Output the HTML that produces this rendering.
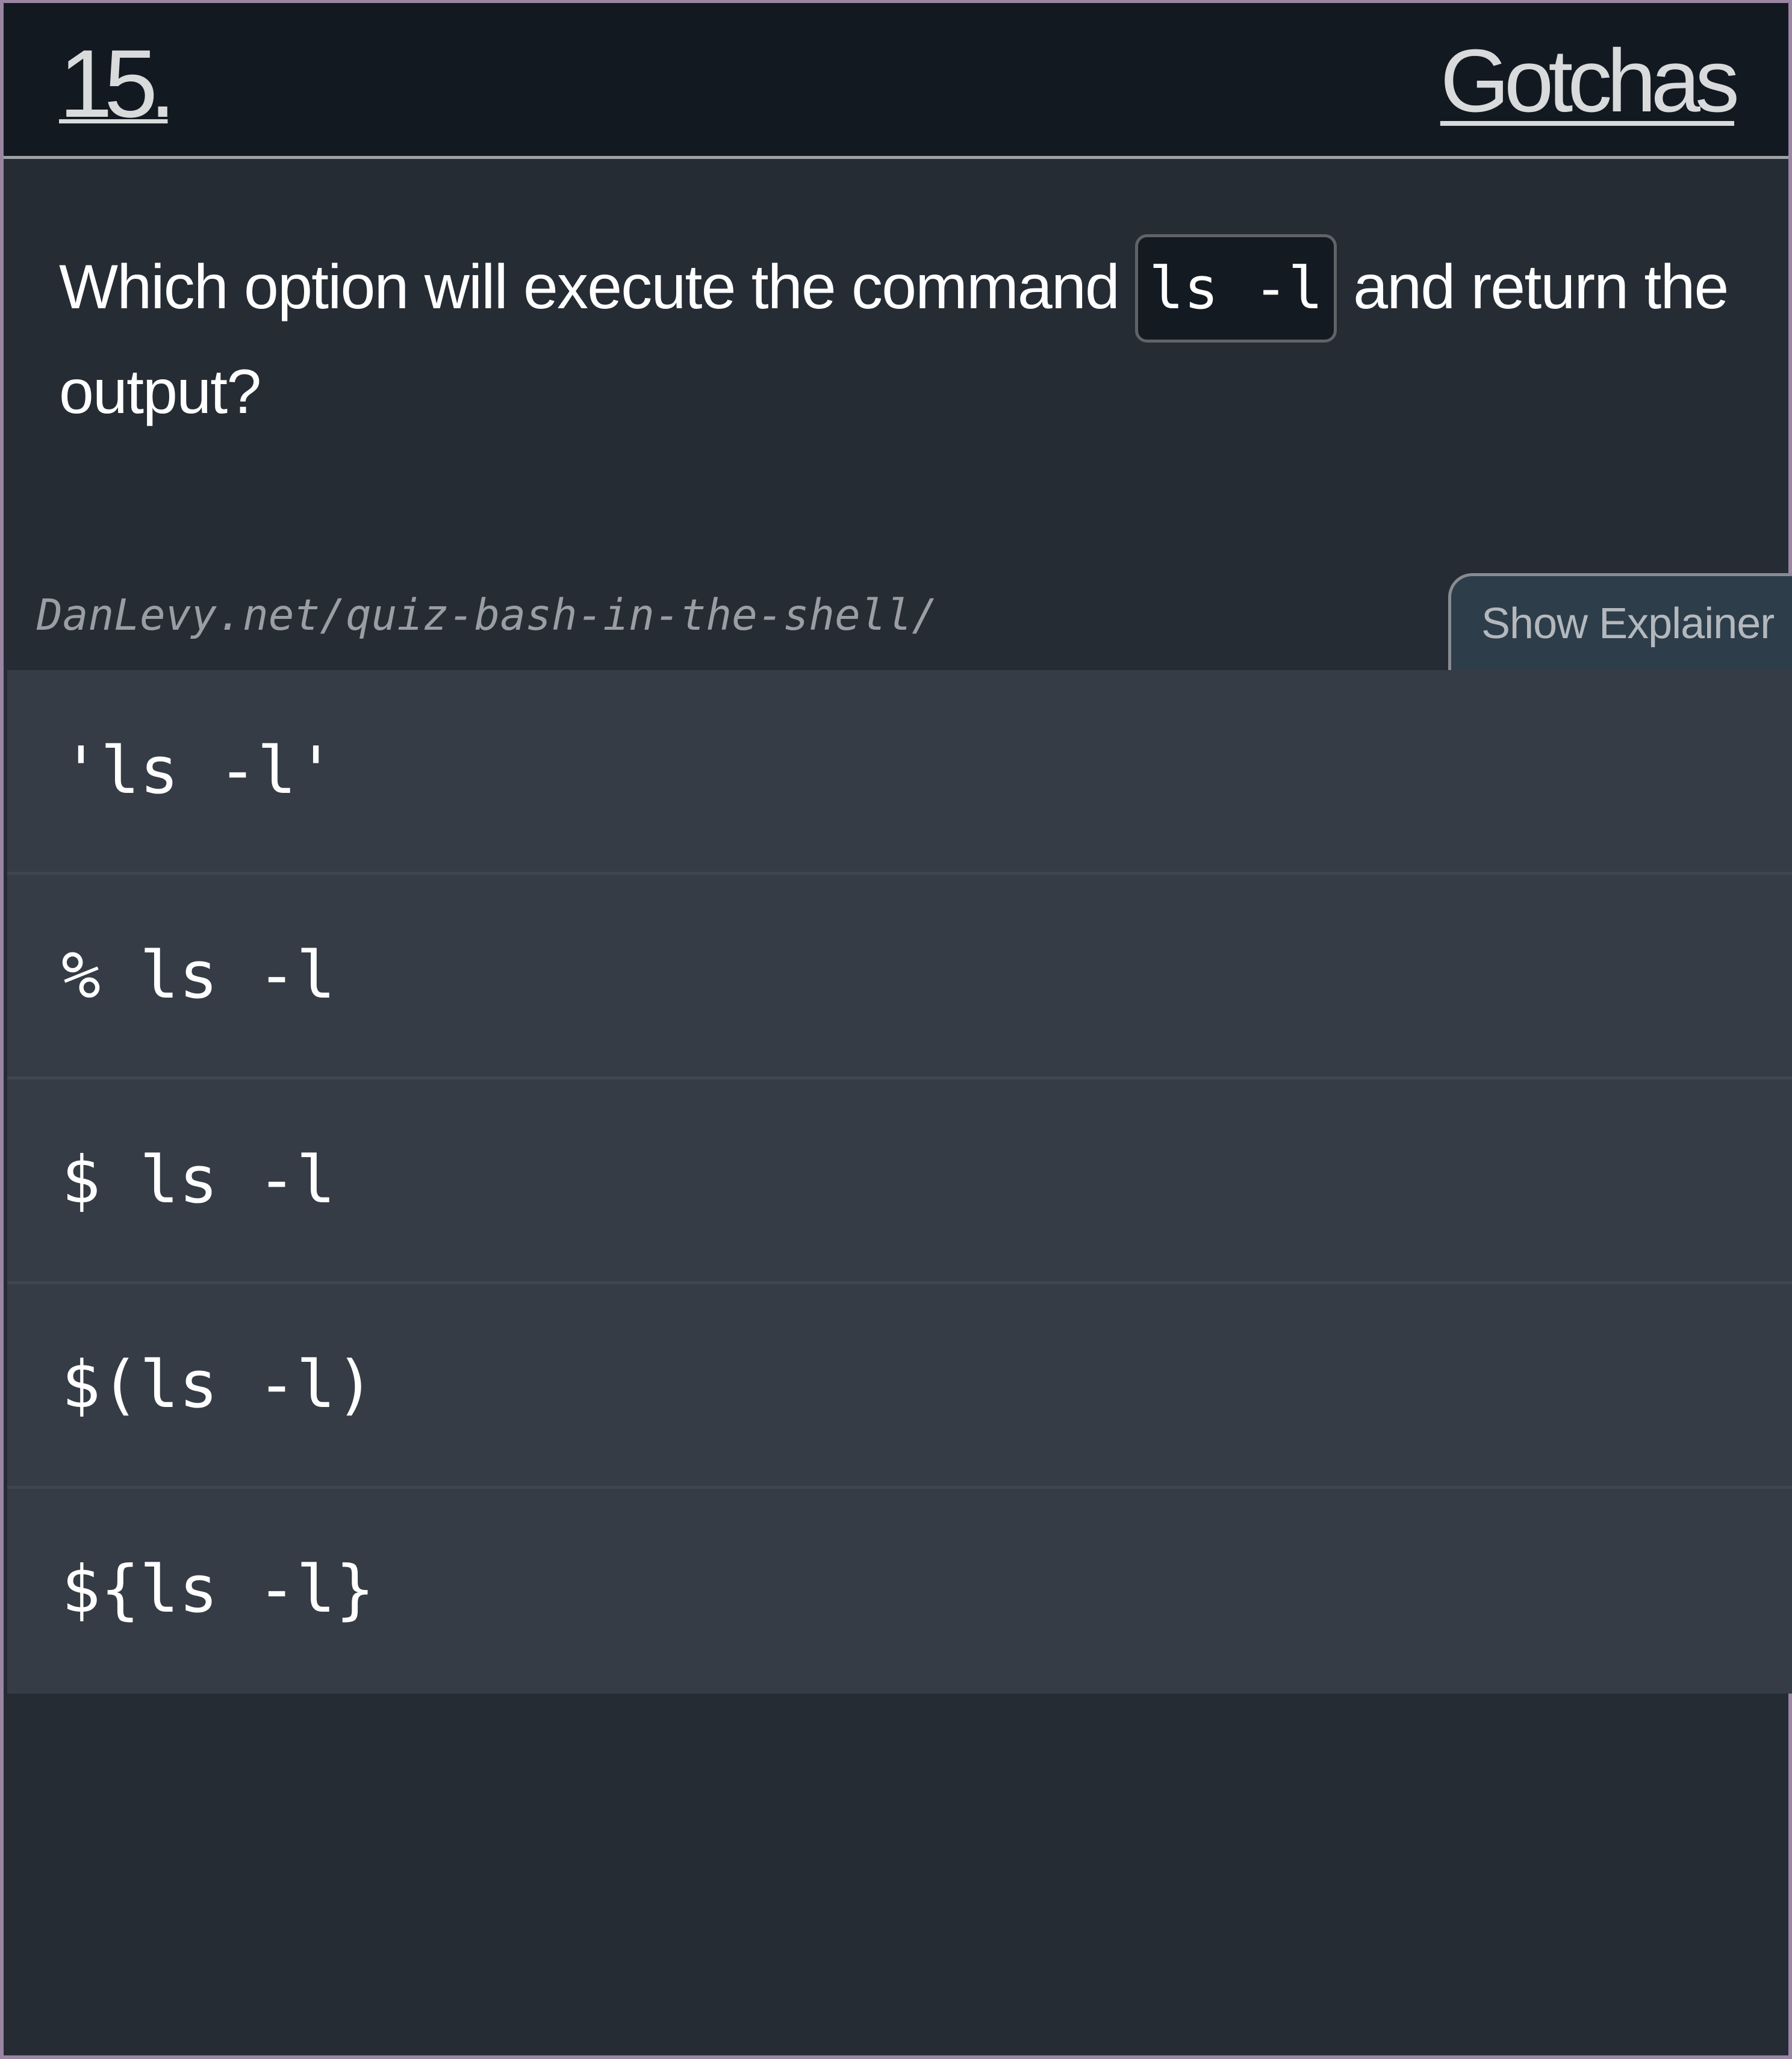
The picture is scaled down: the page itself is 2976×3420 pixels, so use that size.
<!DOCTYPE html>
<html><head><meta charset="utf-8"><style>
*{margin:0;padding:0;box-sizing:border-box}
html,body{width:2976px;height:3420px;overflow:hidden;background:#252b33}
.frame{position:absolute;left:0;top:0;width:2976px;height:3420px;border:6px solid #9a86a2;border-top-width:5px;background:#262c34}
.hdr{position:absolute;left:0;top:0;width:2964px;height:259px;background:#131920;border-bottom:5px solid #9ea2a6}
.num{position:absolute;left:92px;top:54px;font-family:"Liberation Sans",sans-serif;font-size:160px;color:#d8dadc;text-decoration:underline;text-decoration-thickness:7px;letter-spacing:-14px;line-height:1}
.got{position:absolute;right:90px;top:56px;font-family:"Liberation Sans",sans-serif;font-size:148px;color:#d8dadc;text-decoration:underline;text-decoration-thickness:8px;text-underline-offset:16px;line-height:1;letter-spacing:-9px}
.q{position:absolute;left:92px;top:390px;width:2830px;font-family:"Liberation Sans",sans-serif;font-size:104px;color:#fff;line-height:164px;letter-spacing:-1.8px}
.code{display:inline-block;font-family:"DejaVu Sans Mono",monospace;font-size:96px;background:#131a21;border:5px solid #5f6368;border-radius:20px;padding:0 18px;line-height:170px;vertical-align:top;margin-top:-6px;letter-spacing:0}
.url{position:absolute;left:55px;top:975px;font-family:"DejaVu Sans Mono",monospace;font-style:italic;font-size:71px;color:#9a9ea4}
.btn{position:absolute;left:2399px;top:947px;width:577px;height:162px;background:#2e3d4a;border:5px solid #888c92;border-right:none;border-bottom:none;border-top-left-radius:40px;font-family:"Liberation Sans",sans-serif;font-size:72px;color:#b3b8bd;padding:38px 0 0 50px;letter-spacing:-1px}
.opts{position:absolute;left:6px;top:1108px;width:2964px}
.o{height:340px;background:#353c45;border-bottom:5px solid #40464f;font-family:"DejaVu Sans Mono",monospace;font-size:108px;color:#fff;padding-left:90px;line-height:335px;white-space:pre}
.o:last-child{border-bottom:none}
</style></head><body>
<div class="frame">
<div class="hdr"><div class="num">15.</div><div class="got">Gotchas</div></div>
<div class="q">Which option will execute the command <span class="code">ls -l</span> and return the output?</div>
<div class="url">DanLevy.net/quiz-bash-in-the-shell/</div>
<div class="btn">Show Explainer</div>
<div class="opts">
<div class="o">'ls -l'</div>
<div class="o">% ls -l</div>
<div class="o">$ ls -l</div>
<div class="o">$(ls -l)</div>
<div class="o">${ls -l}</div>
</div>
</div>
</body></html>
